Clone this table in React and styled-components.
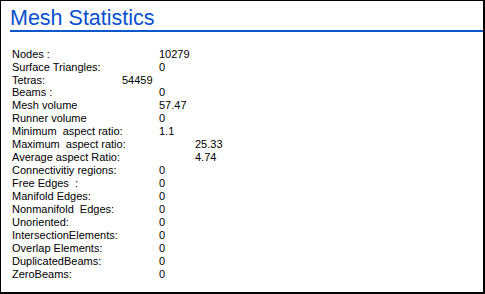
import styled, { createGlobalStyle } from "styled-components"

const stats = [
    { label: "Nodes :", value: "10279" },
    { label: "Surface Triangles:", value: "0" },
    { label: "Tetras:", value: "54459", shift: -37, tight: true },
    { label: "Beams :", value: "0" },
    { label: "Mesh volume", value: "57.47" },
    { label: "Runner volume", value: "0" },
    { label: "Minimum  aspect ratio:", value: "1.1" },
    { label: "Maximum  aspect ratio:", value: "25.33", shift: 36 },
    { label: "Average aspect Ratio:", value: "4.74", shift: 36 },
    { label: "Connectivitiy regions:", value: "0" },
    { label: "Free Edges  :", value: "0" },
    { label: "Manifold Edges:", value: "0" },
    { label: "Nonmanifold  Edges:", value: "0" },
    { label: "Unoriented:", value: "0" },
    { label: "IntersectionElements:", value: "0" },
    { label: "Overlap Elements:", value: "0" },
    { label: "DuplicatedBeams:", value: "0" },
    { label: "ZeroBeams:", value: "0" },
]

const App = () => {
    return (
        <>
            <GlobalStyle />
            <Window>
                <Heading>Mesh Statistics</Heading>
                <StatList>
                    {stats.map((s) => (
                        <Row key={s.label} $tight={s.tight}>
                            <Label>{s.label}</Label>
                            <Value $shift={s.shift || 0}>{s.value}</Value>
                        </Row>
                    ))}
                </StatList>
            </Window>
        </>
    )
}

export default App

const GlobalStyle = createGlobalStyle`
body {
    margin: 0;
    background: #fff;
    font-family: "Liberation Sans", Arial, sans-serif;
}
`

const Window = styled.div`
width: 485px;
height: 294px;
box-sizing: border-box;
border-style: solid;
border-color: #000;
border-width: 1px 2px 2px 1px;
background: #fff;
display: flex;
flex-direction: column;
`

const Heading = styled.div`
margin: 6px 0 0 9px;
height: 23px;
line-height: 23px;
font-size: 21.5px;
color: #0650d0;
border-bottom: 2px solid #0a58ca;
`

const StatList = styled.div`
margin-top: 16px;
padding-left: 11px;
display: flex;
flex-direction: column;
`

const Row = styled.div`
display: flex;
height: ${(p) => (p.$tight ? "12px" : "13px")};
line-height: ${(p) => (p.$tight ? "12px" : "13px")};
font-size: 11px;
color: #000;
white-space: pre;
`

const Label = styled.div`
width: 147px;
flex-shrink: 0;
`

const Value = styled.div`
margin-left: ${(p) => p.$shift}px;
`
